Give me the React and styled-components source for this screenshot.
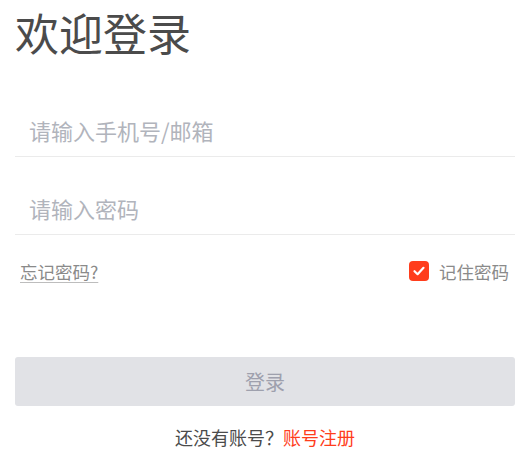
import React, { useState } from "react";
import styled, { createGlobalStyle } from "styled-components";

const GlobalStyle = createGlobalStyle`
  * { box-sizing: border-box; }
  html, body {
    margin: 0;
    padding: 0;
    background: #ffffff;
    font-family: "Noto Sans CJK SC", "Noto Sans", sans-serif;
  }
`;

const Page = styled.div`
  display: flex;
  flex-direction: column;
  padding: 0 11px 0 15px;
`;

const Title = styled.h1`
  margin: 0;
  height: 104px;
  padding-top: 2px;
  font-size: 44px;
  line-height: 60px;
  font-weight: 400;
  color: #4b4b4b;
`;

const Field = styled.div`
  display: flex;
  align-items: center;
  height: 53px;
  border-bottom: 1px solid #ebebeb;
  & + & {
    margin-top: 25px;
  }
`;

const Input = styled.input`
  flex: 1;
  height: 100%;
  border: none;
  outline: none;
  padding: 0 0 0 14px;
  font-family: inherit;
  font-size: 22px;
  color: #333;
  background: transparent;

  &::placeholder {
    color: #b1b4bc;
  }
`;

const Options = styled.div`
  display: flex;
  justify-content: space-between;
  align-items: center;
  height: 20px;
  margin-top: 26px;
  padding: 0 6px 0 5px;
`;

const Forgot = styled.a`
  font-size: 17.5px;
  color: #8a8a8a;
  text-decoration: underline;
  text-decoration-color: #bdbdbd;
  text-underline-offset: 3px;
  cursor: pointer;
`;

const Remember = styled.label`
  display: flex;
  align-items: center;
  gap: 10px;
  font-size: 17.5px;
  color: #8a8a8a;
  cursor: pointer;
`;

const Box = styled.span`
  display: flex;
  align-items: center;
  justify-content: center;
  width: 20px;
  height: 20px;
  border-radius: 4px;
  background: ${(p) => (p.checked ? "#ff3d1c" : "#fff")};
  border: ${(p) => (p.checked ? "none" : "1px solid #ccc")};
`;

const SubmitButton = styled.button`
  margin-top: 76px;
  height: 49px;
  border: none;
  border-radius: 3px;
  background: #e1e2e6;
  font-family: inherit;
  font-size: 20px;
  color: #9ea0ad;
  cursor: pointer;
`;

const Footer = styled.p`
  margin: 21px 0 0;
  text-align: center;
  font-size: 18px;
  line-height: 20px;
  color: #4b4b4b;
`;

const RegisterLink = styled.a`
  color: #ff3d1c;
  text-decoration: underline;
  text-underline-offset: 3px;
  cursor: pointer;
`;

const App = () => {
  const [remember, setRemember] = useState(true);

  return (
    <Page>
      <GlobalStyle />
      <Title>欢迎登录</Title>
      <Field>
        <Input placeholder="请输入手机号/邮箱" />
      </Field>
      <Field>
        <Input type="password" placeholder="请输入密码" />
      </Field>
      <Options>
        <Forgot>忘记密码?</Forgot>
        <Remember onClick={() => setRemember(!remember)}>
          <Box checked={remember}>
            {remember && (
              <svg width="14" height="14" viewBox="0 0 14 14">
                <path
                  d="M2.5 7.2 L5.6 10.2 L11.5 3.8"
                  fill="none"
                  stroke="#fff"
                  strokeWidth="2.2"
                  strokeLinecap="round"
                  strokeLinejoin="round"
                />
              </svg>
            )}
          </Box>
          记住密码
        </Remember>
      </Options>
      <SubmitButton>登录</SubmitButton>
      <Footer>
        还没有账号？<RegisterLink>账号注册</RegisterLink>
      </Footer>
    </Page>
  );
};

export default App;
